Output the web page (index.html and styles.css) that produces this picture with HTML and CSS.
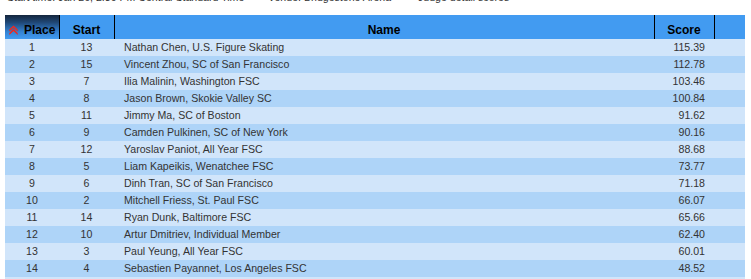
FILE: index.html
```html
<!DOCTYPE html>
<html>
<head>
<meta charset="utf-8">
<link rel="stylesheet" href="styles.css">
</head>
<body>
<div class="page">
  <div class="info">
    <span class="info-start">Start time: Jan 26, 2:30 PM Central Standard Time</span>
    <span class="info-venue">Venue: Bridgestone Arena</span>
    <span class="info-judge">Judge detail scores</span>
  </div>
  <table class="results">
    <colgroup>
      <col class="w-place"><col class="w-start"><col class="w-name"><col class="w-score"><col class="w-extra">
    </colgroup>
    <thead>
      <tr>
        <th class="c-place sorted"><span class="sort-icon"><svg width="9" height="10" viewBox="0 0 9 10"><path d="M0.3 4.6 L4.5 0.4 L8.7 4.6 L8.7 6.6 L4.5 2.6 L0.3 6.6 Z" fill="#f0281e"/><path d="M0.3 8 L4.5 3.8 L8.7 8 L8.7 10 L4.5 6 L0.3 10 Z" fill="#f0281e"/></svg></span>Place</th>
        <th class="c-start">Start</th>
        <th class="c-name">Name</th>
        <th class="c-score">Score</th>
        <th class="c-extra"></th>
      </tr>
    </thead>
    <tbody>
      <tr><td class="c-place">1</td><td class="c-start">13</td><td class="c-name">Nathan Chen, U.S. Figure Skating</td><td class="c-score">115.39</td><td></td></tr>
      <tr><td class="c-place">2</td><td class="c-start">15</td><td class="c-name">Vincent Zhou, SC of San Francisco</td><td class="c-score">112.78</td><td></td></tr>
      <tr><td class="c-place">3</td><td class="c-start">7</td><td class="c-name">Ilia Malinin, Washington FSC</td><td class="c-score">103.46</td><td></td></tr>
      <tr><td class="c-place">4</td><td class="c-start">8</td><td class="c-name">Jason Brown, Skokie Valley SC</td><td class="c-score">100.84</td><td></td></tr>
      <tr><td class="c-place">5</td><td class="c-start">11</td><td class="c-name">Jimmy Ma, SC of Boston</td><td class="c-score">91.62</td><td></td></tr>
      <tr><td class="c-place">6</td><td class="c-start">9</td><td class="c-name">Camden Pulkinen, SC of New York</td><td class="c-score">90.16</td><td></td></tr>
      <tr><td class="c-place">7</td><td class="c-start">12</td><td class="c-name">Yaroslav Paniot, All Year FSC</td><td class="c-score">88.68</td><td></td></tr>
      <tr><td class="c-place">8</td><td class="c-start">5</td><td class="c-name">Liam Kapeikis, Wenatchee FSC</td><td class="c-score">73.77</td><td></td></tr>
      <tr><td class="c-place">9</td><td class="c-start">6</td><td class="c-name">Dinh Tran, SC of San Francisco</td><td class="c-score">71.18</td><td></td></tr>
      <tr><td class="c-place">10</td><td class="c-start">2</td><td class="c-name">Mitchell Friess, St. Paul FSC</td><td class="c-score">66.07</td><td></td></tr>
      <tr><td class="c-place">11</td><td class="c-start">14</td><td class="c-name">Ryan Dunk, Baltimore FSC</td><td class="c-score">65.66</td><td></td></tr>
      <tr><td class="c-place">12</td><td class="c-start">10</td><td class="c-name">Artur Dmitriev, Individual Member</td><td class="c-score">62.40</td><td></td></tr>
      <tr><td class="c-place">13</td><td class="c-start">3</td><td class="c-name">Paul Yeung, All Year FSC</td><td class="c-score">60.01</td><td></td></tr>
      <tr><td class="c-place">14</td><td class="c-start">4</td><td class="c-name">Sebastien Payannet, Los Angeles FSC</td><td class="c-score">48.52</td><td></td></tr>
      <tr><td class="c-place">15</td><td class="c-start">1</td><td class="c-name">Joseph Klein, Unattached</td><td class="c-score">45.10</td><td></td></tr>
    </tbody>
  </table>
</div>
</body>
</html>
```
FILE: styles.css
```css
html, body {
  margin: 0;
  padding: 0;
  background: #ffffff;
  font-family: "Liberation Sans", Arial, sans-serif;
  color: #333333;
}
.page {
  padding: 0 6px 0 5px;
}
.info {
  display: flex;
  font-size: 10.6px;
  line-height: 13px;
  height: 13px;
  margin-top: -9px;
  margin-bottom: 11px;
  padding-left: 2px;
  color: #333;
  white-space: nowrap;
}
.info-start { width: 261px; }
.info-venue { width: 150px; }
.results {
  border-collapse: collapse;
  width: 740px;
  table-layout: fixed;
  font-size: 10.6px;
}
.w-place { width: 54px; }
.w-start { width: 55px; }
.w-name { width: 540px; }
.w-score { width: 60px; }
.w-extra { width: 31px; }
.results th {
  box-sizing: border-box;
  height: 24px;
  padding: 0 0 2px 0;
  background: #429bf1;
  color: #000;
  font-size: 12px;
  font-weight: bold;
  vertical-align: bottom;
  text-align: center;
  border-right: 1px solid #000;
  line-height: 14px;
}
.results th.c-extra {
  border-right: none;
}
.results th.sorted {
  background: linear-gradient(to bottom, #14263d 0%, #1f4674 30%, #3482d2 70%, #429bf1 100%);
  text-align: left;
  padding-left: 4px;
}
.sort-icon {
  display: inline-block;
  width: 9px;
  height: 10px;
  margin-right: 6px;
  vertical-align: -1px;
}
.sort-icon svg { display: block; }
.results td {
  box-sizing: border-box;
  height: 17px;
  padding: 0;
  line-height: 13px;
  vertical-align: middle;
  color: #333;
}
.results tbody tr:nth-child(odd) td { background: #d1e5fa; }
.results tbody tr:nth-child(even) td { background: #aed4f8; }
.results td.c-place, .results td.c-start { text-align: center; }
.results td.c-name { padding-left: 10px; text-align: left; }
.results td.c-score { text-align: right; padding-right: 9px; }
```
